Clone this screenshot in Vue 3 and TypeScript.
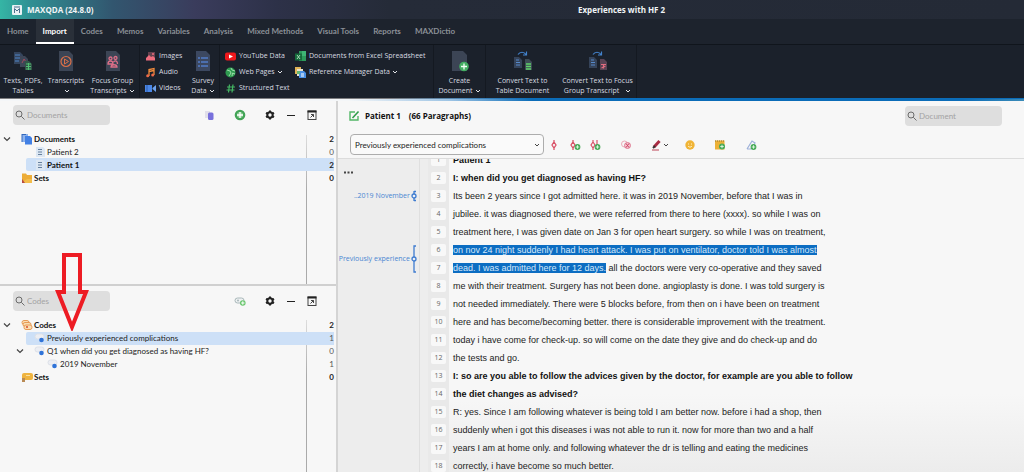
<script setup lang="ts">
import { ref } from 'vue'

interface TreeRow {
  label: string
  count: number
  level: number
  icon: 'docs' | 'doc' | 'sets' | 'codes' | 'code' | 'codesets'
  bold?: boolean
  open?: boolean
  selected?: boolean
}
interface Line {
  text: string
  bold?: boolean
  mark?: string
}

const tabs = ['Home', 'Import', 'Codes', 'Memos', 'Variables', 'Analysis', 'Mixed Methods', 'Visual Tools', 'Reports', 'MAXDictio']
const activeTab = ref('Import')
const activeCode = ref('Previously experienced complications')
const documentSearch = ref('')
const codeSearch = ref('')
const textSearch = ref('')

const documents: TreeRow[] = [
  { label: 'Documents', count: 2, level: 0, icon: 'docs', bold: true, open: true },
  { label: 'Patient 2', count: 0, level: 1, icon: 'doc' },
  { label: 'Patient 1', count: 2, level: 1, icon: 'doc', bold: true, selected: true },
  { label: 'Sets', count: 0, level: 0, icon: 'sets', bold: true },
]
const codes: TreeRow[] = [
  { label: 'Codes', count: 2, level: 0, icon: 'codes', bold: true, open: true },
  { label: 'Previously experienced complications', count: 1, level: 1, icon: 'code', selected: true },
  { label: 'Q1 when did you get diagnosed as having HF?', count: 0, level: 1, icon: 'code', open: true },
  { label: '2019 November', count: 1, level: 2, icon: 'code' },
  { label: 'Sets', count: 0, level: 0, icon: 'codesets', bold: true },
]
const panels = [
  { id: 'documents', placeholder: 'Documents', rows: documents, model: documentSearch },
  { id: 'codes', placeholder: 'Codes', rows: codes, model: codeSearch },
]

const lines: Line[] = [
  { text: 'Patient 1', bold: true },
  { text: 'I: when did you get diagnosed as having HF?', bold: true },
  { text: 'Its been 2 years since I got admitted here. it was in 2019 November, before that I was in' },
  { text: 'jubilee. it was diagnosed there, we were referred from there to here (xxxx). so while I was on' },
  { text: 'treatment here, I was given date on Jan 3 for open heart surgery. so while I was on treatment,' },
  { mark: 'on nov 24 night suddenly I had heart attack. I was put on ventilator, doctor told I was almost', text: '' },
  { mark: 'dead. I was admitted here for 12 days.', text: ' all the doctors were very co-operative and they saved' },
  { text: 'me with their treatment. Surgery has not been done. angioplasty is done. I was told surgery is' },
  { text: 'not needed immediately. There were 5 blocks before, from then on i have been on treatment' },
  { text: 'here and has become/becoming better. there is considerable improvement with the treatment.' },
  { text: 'today i have come for check-up. so will come on the date they give and do check-up and do' },
  { text: 'the tests and go.' },
  { text: 'I: so are you able to follow the advices given by the doctor, for example are you able to follow', bold: true },
  { text: 'the diet changes as advised?', bold: true },
  { text: 'R: yes. Since I am following whatever is being told I am better now. before i had a shop, then' },
  { text: 'suddenly when i got this diseases i was not able to run it. now for more than two and a half' },
  { text: 'years I am at home only. and following whatever the dr is telling and eating the medicines' },
  { text: 'correctly, i have become so much better.' },
]
</script>

<template>
  <div class="app">
    <header class="titlebar">
      <svg class="logo" viewBox="0 0 12 12"><rect x="1" y="1" width="10" height="10" rx="1" fill="#e9f1f5" /><path d="M3.500 9V4.500l2.500 2.500 2.500-2.500V9M3 3h6" fill="none" stroke="#4b6f8d" /></svg>
      <span class="app-name">MAXQDA (24.8.0)</span>
      <h1>Experiences with HF 2</h1>
    </header>

    <nav class="tabs">
      <button v-for="t in tabs" :key="t" :class="{ active: t === activeTab }" @click="activeTab = t">{{ t }}</button>
    </nav>

    <div class="ribbon">
      <button class="big w-texts">
        <svg viewBox="0 0 22 22"><path d="M2 2h6l3 3v9H2z" fill="#34445c" /><path d="M3 5h5M3 8h5M3 11h4" stroke="#4e85c8" /><path d="M8 6h5l3 3v8H8z" fill="#3d4657" /><path d="M10 13l2-4 2 3" fill="none" stroke="#a04a5c" /><path d="M13 11h4l3 3v6h-7z" fill="#315447" /><path d="M14 14h5M14 16.500h5M14 19h5M16.500 13v7" stroke="#52bd73" /></svg>
        <span>Texts, PDFs,<br>Tables</span>
      </button>
      <button class="big w-trans">
        <svg viewBox="0 0 22 22"><path d="M4 1h10l4 4v16H4z" fill="#3c4555" /><circle cx="11" cy="11.500" r="5" fill="none" stroke="#dc7048" stroke-width="1.200" /><path d="M9.500 9l4 2.500-4 2.500z" fill="none" stroke="#dc7048" /></svg>
        <span>Transcripts<br><svg class="chev" viewBox="0 0 6 6"><path d="M1 2l2 2 2-2" /></svg></span>
      </button>
      <button class="big w-focus">
        <svg viewBox="0 0 22 22"><path d="M4 1h10l4 4v16H4z" fill="#3c4555" /><g fill="none" stroke="#dc6f88" stroke-width="1.300"><circle cx="8.500" cy="8.500" r="1.500" /><circle cx="13.500" cy="8" r="1.500" /><path d="M6 14c0-4 5-4 5 0zM11.500 12c2-2 4-1 4 2M9 17c0-3 6-3 6 0z" /></g></svg>
        <span>Focus Group<br>Transcripts<svg class="chev" viewBox="0 0 6 6"><path d="M1 2l2 2 2-2" /></svg></span>
      </button>
      <div class="stack w-media">
        <button><svg viewBox="0 0 11 11"><path d="M3 1h7v8H3z" fill="#64424f" /><path d="M1 9.500V7l3-3 2 2 2-1 2 2v2.500z" fill="#ef6d7e" /><circle cx="8" cy="3" r="1" fill="#ef6d7e" /></svg>Images</button>
        <button><svg viewBox="0 0 11 11"><path d="M4 9V2.500l5-1V8M4 4.500l5-1" fill="none" stroke="#f28b3c" stroke-width="1.300" /><circle cx="2.700" cy="8.800" r="1.500" fill="#ee6a48" /><circle cx="7.700" cy="8" r="1.500" fill="#ee6a48" /></svg>Audio</button>
        <button><svg viewBox="0 0 11 11"><rect y="2" width="7" height="7" fill="#4b88e8" /><path d="M7.500 5L11 2v7L7.500 6z" fill="#6da3f0" /><path d="M2 2v7" stroke="#315fae" /></svg>Videos</button>
      </div>
      <button class="big w-survey">
        <svg viewBox="0 0 22 22"><path d="M4 1h10l4 4v16H4z" fill="#3c4860" /><path d="M6 8h2M9 8h7M6 12h2M9 12h7M6 16h2M9 16h7" stroke="#527cc8" stroke-width="1.300" /></svg>
        <span>Survey<br>Data<svg class="chev" viewBox="0 0 6 6"><path d="M1 2l2 2 2-2" /></svg></span>
      </button>
      <div class="stack w-web">
        <button><svg viewBox="0 0 11 11"><rect y="1.500" width="11" height="8" rx="2" fill="#f0181c" /><path d="M4 3.500l4 2-4 2z" fill="#fff" /></svg>YouTube Data</button>
        <button><svg viewBox="0 0 11 11"><circle cx="5.500" cy="5.500" r="5" fill="#2f9b50" /><path d="M2 3l3 1 1 2-2 3M6 1l1 2 3 1M10 7L7.500 6 7 9" stroke="#9bdca9" fill="none" /></svg>Web Pages<svg class="chev" viewBox="0 0 6 6"><path d="M1 2l2 2 2-2" /></svg></button>
        <button><svg viewBox="0 0 11 11"><path d="M4.500 1.500l-1 8M8 1.500l-1 8M2 4h8M1.500 7h8" stroke="#45b965" stroke-width="1.200" /></svg>Structured Text</button>
      </div>
      <div class="stack w-refs">
        <button><svg viewBox="0 0 11 11"><path d="M4 0h7v10H4z" fill="#2d9b5b" /><path d="M7 0h4v5H7z" fill="#3fb574" /><rect y="2.500" width="7" height="7" fill="#176c3c" /><path d="M2 4l3 4M5 4L2 8" stroke="#a9d9b8" /></svg>Documents from Excel Spreadsheet</button>
        <button><svg viewBox="0 0 11 11"><path d="M0 0h6v7H0z" fill="#e0b356" /><path d="M2 2h6v7H2z" fill="#e8e3cf" /><path d="M4 4h5l2 2v5H4z" fill="#4990e6" /><path d="M2 4h3v3H2z" fill="#62b574" /><path d="M6 7h3M6 9h3" stroke="#fff" /></svg>Reference Manager Data<svg class="chev" viewBox="0 0 6 6"><path d="M1 2l2 2 2-2" /></svg></button>
      </div>
      <button class="big w-create">
        <svg viewBox="0 0 22 22"><path d="M3 1h11l4 4v16H3z" fill="#3c4555" /><circle cx="15" cy="16.500" r="4.800" fill="#43ad62" /><path d="M15 13.500v6M12 16.500h6" stroke="#f2fff4" stroke-width="1.300" /></svg>
        <span>Create<br>Document<svg class="chev" viewBox="0 0 6 6"><path d="M1 2l2 2 2-2" /></svg></span>
      </button>
      <button class="big w-table">
        <svg viewBox="0 0 22 22"><path d="M2 7h5l3 3v8H2z" fill="#354359" /><path d="M4 10h3M4 12.500h4M4 15h4" stroke="#5689ca" /><path d="M13 9h4l3 3v8h-7z" fill="#3d4b55" /><path d="M14 14h5M14 16.500h5M14 19h5" stroke="#5fd26a" stroke-width="1.300" /><path d="M6 4.500c2-3 6-3 8 0M14.500 1.500v3.500H11" fill="none" stroke="#4383cd" stroke-width="1.200" /></svg>
        <span>Convert Text to<br>Table Document</span>
      </button>
      <button class="big w-convert">
        <svg viewBox="0 0 22 22"><path d="M2 7h5l3 3v8H2z" fill="#354359" /><path d="M4 10h3M4 12.500h4M4 15h4" stroke="#5689ca" /><path d="M13 9h4l3 3v8h-7z" fill="#584354" /><path d="M14 14.500h5M16.500 14.500v4M14.500 18l4-2" stroke="#e16c80" stroke-width="1.200" /><path d="M6 4.500c2-3 6-3 8 0M14.500 1.500v3.500H11" fill="none" stroke="#4383cd" stroke-width="1.200" /></svg>
        <span>Convert Text to Focus<br>Group Transcript <svg class="chev wide" viewBox="0 0 6 6"><path d="M1 2l2 2 2-2" /></svg></span>
      </button>
    </div>
    <div class="accent"></div>

    <main class="workspace">
      <aside class="side">
        <section v-for="p in panels" :key="p.id" class="panel" :class="p.id">
          <div class="panel-bar">
            <label class="search">
              <svg viewBox="0 0 10 10"><circle cx="4" cy="4" r="3" /><path d="M6.300 6.300L9.500 9.500" /></svg>
              <input v-model="p.model.value" type="text" :placeholder="p.placeholder" :aria-label="p.placeholder">
            </label>
            <div class="tools">
              <template v-if="p.id === 'documents'">
                <button class="spaced" aria-label="Activated documents"><svg viewBox="0 0 12 12"><path d="M1 2h5v7H1z" fill="#e1dfea" /><rect x="4" y="3.500" width="5.500" height="7.500" rx="1.500" fill="#7870dc" /></svg></button>
                <button class="spaced" aria-label="Add document"><svg viewBox="0 0 12 12"><circle cx="6" cy="6" r="5.300" fill="#43a457" /><circle cx="6" cy="6" r="3" fill="#8ccf94" /><path d="M6 3v6M3 6h6" stroke="#fff" stroke-width="1.300" /></svg></button>
              </template>
              <button v-else class="spaced" aria-label="Add code"><svg viewBox="0 0 12 12"><rect x="1" y="3" width="9" height="5" rx="2.500" fill="#eef1f2" stroke="#a9b8ba" /><circle cx="4" cy="5.500" r="1" fill="#a9b8ba" /><circle cx="8.800" cy="8" r="2.800" fill="#69c66d" /><path d="M8.800 6.300v3.400M7.100 8h3.400" stroke="#fff" /></svg></button>
              <button aria-label="Settings"><svg viewBox="0 0 12 12"><circle cx="6" cy="6" r="2.700" fill="none" stroke="#222" stroke-width="2" /><path d="M6 1.500v2M6 8.500v2M2 3.800l2 1.100M8 7.100l2 1.100M2 8.200l2-1.100M8 4.900l2-1.100" stroke="#222" stroke-width="2" /></svg></button>
              <button aria-label="Minimize"><svg viewBox="0 0 12 12"><path d="M2 6.500h8" stroke="#222" /></svg></button>
              <button aria-label="Undock"><svg viewBox="0 0 12 12"><rect x="2" y="2" width="8" height="8.500" fill="none" stroke="#444" /><path d="M1.500 2.500h9" stroke="#222" stroke-width="2" /><path d="M4.500 8.500L7.500 5.500M5 5.500h2.500V8" fill="none" stroke="#444" /></svg></button>
            </div>
          </div>
          <ul class="tree">
            <li v-for="(r, i) in p.rows" :key="i" :class="['level-' + r.level, { bold: r.bold, selected: r.selected }]">
              <span class="twist"><svg v-if="r.open" viewBox="0 0 8 8"><path d="M1 2.500l3 3 3-3" fill="none" stroke="#444" stroke-width="1.200" /></svg></span>
              <span class="row-body">
                <svg v-if="r.icon === 'docs'" viewBox="0 0 12 12"><path d="M1 1h6v8H1z" fill="#8eb3ec" /><path d="M1 1v8M1 1.500h4" stroke="#3268bd" /><path d="M4 3h5l2 2v6.500H4z" fill="#4280e4" /></svg>
                <svg v-else-if="r.icon === 'doc'" viewBox="0 0 12 12"><path d="M2 1h7l2 2v8H2z" fill="#dce7f3" /><path d="M4 3.500h4M4 6h4M4 8.500h4" stroke="#66809e" /></svg>
                <svg v-else-if="r.icon === 'sets'" viewBox="0 0 12 12"><path d="M1 1.500h4l1 1.500h5v8H1z" fill="#edad37" /><path d="M3 9L6 7h5v4H3z" fill="#f4bd4a" /><path d="M1 7v4h3z" fill="#b84b43" /></svg>
                <svg v-else-if="r.icon === 'codes'" viewBox="0 0 12 12"><g fill="#f9ddb4" stroke="#e79a55"><rect x="1" y="1.500" width="7" height="4" rx="2" /><rect x="2" y="3.500" width="8" height="4" rx="2" /><rect x="3" y="6" width="8" height="4.500" rx="2" /></g><circle cx="6" cy="8" r="1" fill="#d94d2f" /></svg>
                <svg v-else-if="r.icon === 'codesets'" viewBox="0 0 12 12"><rect x="1" y="2" width="11" height="7" rx="2" fill="#efb440" /><path d="M5 4.500h4" stroke="#fbe1a0" /><path d="M1 7h3v4H1z" fill="#b98b55" /></svg>
                <svg v-else viewBox="0 0 12 12"><rect x="1" y="2" width="9" height="5" rx="2.500" fill="#eceef3" stroke="#dde1e9" /><circle cx="7.500" cy="8" r="2.300" fill="#2f73d8" /></svg>
                <span class="name">{{ r.label }}</span>
                <span class="count">{{ r.count }}</span>
              </span>
            </li>
          </ul>
        </section>
        <svg class="arrow" viewBox="0 0 34 78"><path d="M9 2H25V39H31L17 74L3 39H9Z" fill="none" stroke="#ed1c24" stroke-width="4" /></svg>
      </aside>

      <section class="viewer">
        <div class="doc-head">
          <svg class="edit" viewBox="0 0 12 12"><path d="M7 2H2v8h8V6" fill="none" stroke="#53b767" stroke-width="1.400" /><path d="M4.500 8L10.500 1.500" stroke="#2f9d4b" stroke-width="1.600" /></svg>
          <h2>Patient 1</h2><span class="paras">(66 Paragraphs)</span>
          <label class="search">
            <svg viewBox="0 0 10 10"><circle cx="4" cy="4" r="3" /><path d="M6.300 6.300L9.500 9.500" /></svg>
            <input v-model="textSearch" type="text" placeholder="Document" aria-label="Document">
          </label>
        </div>
        <div class="code-bar">
          <label class="combo">
            <select v-model="activeCode" aria-label="Code">
              <option>Previously experienced complications</option>
              <option>2019 November</option>
            </select>
            <svg viewBox="0 0 8 8"><path d="M2 3l2 2 2-2" fill="none" stroke="#444" /></svg>
          </label>
          <button class="b-code" aria-label="Code"><svg viewBox="0 0 12 12"><path d="M6 1v2M6 9v2M6 3l2 3-2 3-2-3z" fill="none" stroke="#d95268" stroke-width="1.300" /></svg></button>
          <button class="b-new" aria-label="Code with new code"><svg viewBox="0 0 12 12"><path d="M4 1v2M4 9v2M4 3l2 3-2 3-2-3z" fill="none" stroke="#d95268" stroke-width="1.300" /><circle cx="8.500" cy="8" r="2.900" fill="#46a957" /><path d="M8.500 6.300v3.400M6.800 8h3.400" stroke="#d9f3dc" /></svg></button>
          <button class="b-vivo" aria-label="Code in vivo"><svg viewBox="0 0 12 12"><path d="M4 1v2M4 9v2M4 3l2 3-2 3-2-3zM8 1v5" fill="none" stroke="#d95268" stroke-width="1.200" /><circle cx="8.500" cy="8" r="2.900" fill="#46a957" /><path d="M8.500 6.300v3.400M6.800 8h3.400" stroke="#d9f3dc" /></svg></button>
          <button class="b-smart" aria-label="Smart coding"><svg viewBox="0 0 12 12"><circle cx="4.500" cy="5" r="3" fill="none" stroke="#ecabb8" /><circle cx="7.500" cy="6.500" r="3" fill="#f4c4cd" stroke="#df7f96" /><path d="M6 4.500l3 4M9 4.500l-3 4" stroke="#cf4467" /></svg></button>
          <button class="b-pen" aria-label="Highlight"><svg viewBox="0 0 12 12"><path d="M4 8L9.500 2" stroke="#a92c43" stroke-width="3" /><path d="M3 9l2-2" stroke="#333" stroke-width="2" /><path d="M2 11h7" stroke="#bd4557" /></svg></button>
          <svg class="pen-chev" viewBox="0 0 6 6"><path d="M1 2l2 2 2-2" fill="none" stroke="#444" /></svg>
          <button class="b-emoji" aria-label="Emoticode"><svg viewBox="0 0 12 12"><circle cx="6" cy="6" r="4.700" fill="#f0b436" /><path d="M4 5h1M7 5h1M4 7c1 1.500 3 1.500 4 0" fill="none" stroke="#fff0c4" /></svg></button>
          <button class="b-memo" aria-label="New memo"><svg viewBox="0 0 12 12"><rect x="1" y="1.500" width="9.500" height="9" fill="#ecb137" /><path d="M1 2h10" stroke="#8c7232" stroke-dasharray="1 1" /><circle cx="8" cy="7.500" r="3" fill="#46a957" /><path d="M8 5.800v3.400M6.300 7.500h3.400" stroke="#d9f3dc" /></svg></button>
          <button class="b-link" aria-label="Insert link"><svg viewBox="0 0 12 12"><path d="M2 10L7 2l3 2-2 3M2 10h4L8 6" fill="none" stroke="#9db0da" stroke-width="1.200" /><circle cx="8.500" cy="8" r="2.900" fill="#46a957" /><path d="M8.500 6.300v3.400M6.800 8h3.400" stroke="#d9f3dc" /></svg></button>
        </div>
        <div class="page">
          <div class="coding">
            <button class="more" aria-label="More"><svg viewBox="0 0 9 3"><path d="M0 .5h2v2H0zM3.500.5h2v2h-2zM7 .5h2v2H7z" fill="#444" /></svg></button>
            <div class="stripe november"><span>..2019 November</span><svg viewBox="0 0 6 12"><path d="M3 1v3M3 8v3M5 1.500H3M5 10.500H3" stroke="#3f7cd0" stroke-width="1.300" fill="none" /><circle cx="3" cy="6" r="2" fill="#e9eef6" stroke="#3f7cd0" stroke-width="1.300" /></svg></div>
            <div class="stripe previous"><span>Previously experience</span><svg viewBox="0 0 6 28"><path d="M5 1H3v26h2" stroke="#3f7cd0" stroke-width="1.300" fill="none" /><circle cx="3" cy="14" r="2" fill="#e9eef6" stroke="#3f7cd0" stroke-width="1.300" /></svg></div>
          </div>
          <ol class="text">
            <li v-for="(l, i) in lines" :key="i" :class="{ strong: l.bold }">
              <span class="num"><i>{{ i + 1 }}</i></span>
              <p><mark v-if="l.mark">{{ l.mark }}</mark>{{ l.text }}</p>
            </li>
          </ol>
        </div>
      </section>
    </main>
  </div>
</template>

<style>
body { margin: 0; background: #f7f7f7; }
</style>

<style scoped>
* { box-sizing: border-box; }
.app { height: 100vh; display: flex; flex-direction: column; overflow: hidden; font: 8px/10px Lato, "Open Sans", sans-serif; color: #222; background: #f7f7f7; }
button { font: inherit; color: inherit; background: none; border: 0; padding: 0; margin: 0; white-space: nowrap; }
svg { display: block; flex: none; }
h1, h2, p, ul, ol { margin: 0; padding: 0; list-style: none; }

.titlebar { height: 19px; flex: none; display: grid; grid-template-columns: 12px 54% auto; align-items: center; gap: 4px; padding-left: 11px; color: #f1f4f6; font: 700 8px/10px "Open Sans", sans-serif; background: linear-gradient(90deg, #35b5a5 0, #2f8f93 3%, #32566f 11%, #3a3c5c 19%, #2d3148 27%, #252b38 38%, #242a36 100%); }
.logo { width: 12px; height: 12px; }
.titlebar h1 { font: inherit; }

.tabs { height: 26px; flex: none; display: flex; align-items: stretch; background: #1d232d; border-bottom: 1px solid #10151c; color: #8b9097; font-weight: 700; }
.tabs button { padding: 0 7px; border-bottom: 2px solid transparent; }
.tabs button.active { color: #fff; background: #2a3039; border-color: #fff; }

.ribbon { height: 53px; flex: none; display: flex; color: #d8dbe0; background: #1b212b; font: 7px/10px "Open Sans", sans-serif; }
.accent { height: 3px; flex: none; background: linear-gradient(90deg, #f4f6f8 34%, #9cc3e4 44%, #0b6cb8 52%, #0b6cb8 94%, #3b8bb8 100%) 0 1px no-repeat, linear-gradient(90deg, #7d7d80 38%, #4f86b4 45%, #0b6cb8 52%); }
.big { display: flex; flex-direction: column; align-items: center; gap: 4px; padding-top: 5px; text-align: center; flex: none; }
.big > svg { width: 22px; height: 22px; }
.chev { display: inline-block; width: 6px; height: 6px; margin-left: 2px; fill: none; stroke: #e4e6ea; vertical-align: middle; }
.chev.wide { margin-left: 4px; }
.stack { display: flex; flex-direction: column; flex: none; padding: 3px 0 0 6px; border-left: 1px solid #141921; }
.stack button { height: 16px; display: flex; align-items: center; }
.stack button > svg:first-child { width: 11px; height: 11px; margin-right: 3px; }
.w-texts { width: 46px; }
.w-trans { width: 40px; }
.w-focus { width: 53px; }
.w-media { width: 48px; padding-left: 5px; }
.w-survey { width: 32px; }
.w-web { width: 70px; padding-left: 5px; }
.w-refs { width: 144px; border-left: 0; }
.w-create { width: 53px; border-left: 1px solid #141921; border-right: 1px solid #141921; }
.w-table { width: 73px; }
.w-convert { width: 78px; border-right: 1px solid #141921; }

.workspace { flex: 1; min-height: 0; display: grid; grid-template-columns: 33% 1fr; }
.side { position: relative; min-height: 0; display: flex; flex-direction: column; border-right: 2px solid #d4d4d4; }
.panel { flex: 50 1 0; min-height: 0; overflow: hidden; background: linear-gradient(#ddd, #aaa 30%) right 29px top 34px / 1px 100% no-repeat, #f7f7f7; }
.panel.codes { flex-grow: 51; border-top: 2px solid #d0d0d0; }
.panel-bar { height: 31px; padding: 4px 18px 0 13px; display: flex; justify-content: space-between; align-items: flex-start; }
.codes .panel-bar { height: 33px; padding-top: 5px; }
.search { width: 97px; height: 20px; flex: none; display: flex; align-items: center; gap: 2px; padding: 0 2px; background: #dedede; border-radius: 4px; }
.search svg { width: 10px; height: 10px; fill: none; stroke: #6b6b6b; }
.search input { width: 100%; min-width: 0; border: 0; outline: 0; padding: 0; background: none; font: inherit; color: #333; }
.search input::placeholder { color: #a3a3a3; opacity: 1; }
.tools { height: 20px; display: flex; align-items: center; gap: 9px; }
.tools svg { width: 12px; height: 12px; }
.tools .spaced { margin-right: 9px; }

.tree li { height: 13px; display: flex; align-items: center; }
.twist { width: 8px; margin: 0 10px 0 3px; flex: none; }
.twist svg { width: 8px; height: 8px; }
.row-body { flex: 1; height: 13px; display: flex; align-items: center; margin-right: 2px; }
.row-body > svg { width: 12px; height: 12px; }
.name { padding-left: 1px; white-space: nowrap; }
.count { margin-left: auto; color: #555; }
.level-1 .twist { margin-left: 16px; }
.level-2 .twist { margin-left: 29px; }
.level-1.selected .twist { margin: 0 0 0 18px; }
.selected .row-body { background: #cde0f7; border-radius: 2px 0 0 2px; padding-left: 8px; }
.bold { font-weight: 700; color: #111; }
.bold .count { color: #222; }
.arrow { position: absolute; left: 55px; top: 152px; width: 34px; height: 78px; }

.viewer { min-width: 0; min-height: 0; display: flex; flex-direction: column; }
.doc-head { height: 31px; flex: none; display: flex; align-items: center; padding: 0 22px 2px 10px; color: #111; }
.edit { width: 12px; height: 12px; margin-right: 5px; }
.doc-head h2, .paras { font: 700 8px/10px "Open Sans", sans-serif; }
.paras { margin-left: 8px; }
.doc-head .search { margin-left: auto; }
.code-bar { height: 27px; flex: none; display: flex; align-items: center; padding: 0 0 1px 12px; border-bottom: 1px solid #dcdcdc; }
.code-bar svg { width: 12px; height: 12px; }
.combo { width: 194px; height: 21px; flex: none; display: grid; align-items: center; border: 1px solid #adadad; border-radius: 4px; background: #fafafa; }
.combo select { grid-area: 1 / 1; width: 100%; height: 19px; appearance: none; border: 0; outline: 0; padding: 0 4px; background: none; font: inherit; color: #222; }
.code-bar .combo svg { grid-area: 1 / 1; justify-self: end; width: 8px; height: 8px; margin-right: 2px; pointer-events: none; }
.b-code { margin-left: 4px; }
.b-new { margin-left: 9px; }
.b-vivo { margin-left: 8px; }
.b-smart { margin-left: 19px; }
.b-pen { margin-left: 18px; }
.code-bar .pen-chev { width: 6px; height: 6px; margin-left: 1px; }
.b-emoji { margin-left: 15px; }
.b-memo { margin-left: 18px; }
.b-link { margin-left: 19px; }

.page { flex: 1; min-height: 0; overflow: hidden; display: flex; background: linear-gradient(#f7f7f7 75%, #ececec); }
.coding { width: 90px; flex: none; display: grid; grid-auto-rows: 18px; grid-template-columns: 1fr; margin-top: -8px; padding-right: 11px; color: #4a86d2; font: 7px/10px "Open Sans", sans-serif; background: linear-gradient(90deg, transparent 81px, #dfdfdf 81px, #dfdfdf 82px, transparent 82px), #ededed; }
.more { grid-row: 2; justify-self: start; align-self: start; margin: 2px 0 0 6px; }
.more svg { width: 9px; height: 3px; }
.stripe { display: flex; align-items: center; justify-content: flex-end; gap: 1px; white-space: nowrap; }
.stripe svg { width: 6px; height: 12px; }
.november { grid-row: 3; }
.previous { grid-row: 6 / span 2; }
.previous svg { height: 28px; }
.text { flex: 1; min-width: 0; margin-top: -8px; font: 9px/18px "Liberation Sans", Arial, sans-serif; color: #222; }
.text li { height: 18px; display: flex; }
.num { width: 21px; flex: none; margin-right: 4px; padding: 3px; background: #e9e9e9; }
.num i { display: block; height: 12px; background: #f8f8f8; border-radius: 2px; font: 7px/12px "Open Sans", sans-serif; color: #666; text-align: center; }
.text p { white-space: nowrap; }
.strong { font-weight: 700; color: #111; }
mark { background: #0c6dc2; color: #d4e8fa; }
</style>
